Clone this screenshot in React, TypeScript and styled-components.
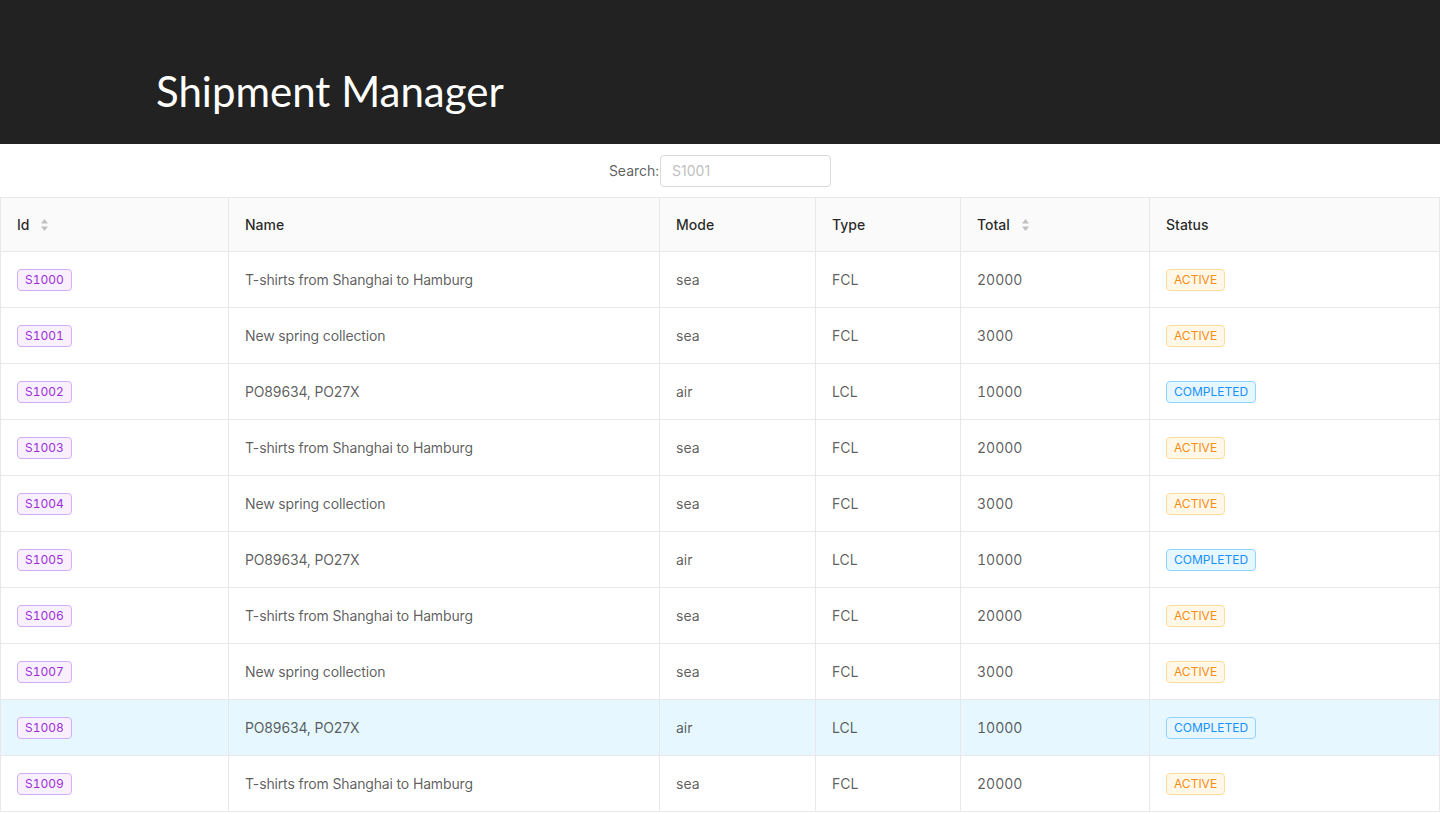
import React from "react";
import styled, { createGlobalStyle } from "styled-components";

const GlobalStyle = createGlobalStyle`
  html, body { margin: 0; padding: 0; background: #fff; }
  body {
    font-family: Inter, "Noto Sans", sans-serif;
    font-size: 14px;
    color: rgba(0,0,0,0.65);
    font-variant-numeric: tabular-nums;
  }
  * { box-sizing: border-box; }
`;

const Header = styled.header`
  height: 144px;
  background: #222222;
  display: flex;
  align-items: center;
  padding: 38px 0 0 156px;
`;

const Title = styled.h1`
  margin: 0;
  font-family: Lato, "Open Sans", sans-serif;
  font-weight: 400;
  font-size: 42px;
  color: #ffffff;
`;

const SearchBar = styled.div`
  height: 53px;
  display: flex;
  align-items: center;
  justify-content: center;
`;

const SearchLabel = styled.label`
  font-size: 14px;
  color: rgba(0,0,0,0.65);
  margin-right: 1px;
`;

const SearchInput = styled.input`
  width: 171px;
  height: 32px;
  border: 1px solid #d9d9d9;
  border-radius: 4px;
  padding: 4px 11px;
  font-family: Inter, sans-serif;
  font-size: 14px;
  color: rgba(0,0,0,0.65);
  outline: none;
  &::placeholder { color: #bfbfbf; }
`;

const Table = styled.table`
  border-collapse: separate;
  border-spacing: 0;
  width: 1440px;
  table-layout: fixed;
  border-left: 1px solid #e8e8e8;
  border-top: 1px solid #e8e8e8;
`;

const Th = styled.th`
  height: 54px;
  padding: 0 16px;
  text-align: left;
  font-weight: 500;
  color: rgba(0,0,0,0.85);
  background: #fafafa;
  border-right: 1px solid #e8e8e8;
  border-bottom: 1px solid #e8e8e8;
  white-space: nowrap;
`;

const HeadInner = styled.span`
  display: inline-flex;
  align-items: center;
  gap: 11px;
`;

const Row = styled.tr<{ $active?: boolean }>`
  background: ${(p) => (p.$active ? "#e6f7ff" : "#ffffff")};
`;

const Td = styled.td<{ $text?: boolean }>`
  height: 56px;
  padding: 0 16px;
  border-right: 1px solid #e8e8e8;
  border-bottom: 1px solid #e8e8e8;
  color: rgba(0,0,0,0.65);
  white-space: nowrap;
  ${(p) =>
    p.$text
      ? "font-variant-numeric: normal; letter-spacing: -0.15px;"
      : ""}
`;

const tagColors = {
  purple: { c: "#9b2fd6", bg: "#f9f0ff", b: "#d3adf7" },
  orange: { c: "#fa8c16", bg: "#fff8e8", b: "#ffdc9a" },
  blue: { c: "#1890ff", bg: "#e6f7ff", b: "#91d5ff" },
};

const Tag = styled.span<{ $tone: keyof typeof tagColors }>`
  display: inline-block;
  height: 22px;
  line-height: 20px;
  padding: 0 7px;
  font-size: 12px;
  border-radius: 4px;
  color: ${(p) => tagColors[p.$tone].c};
  background: ${(p) => tagColors[p.$tone].bg};
  border: 1px solid ${(p) => tagColors[p.$tone].b};
`;

const SortIcon = () => (
  <svg width="9" height="14" viewBox="0 0 9 14" aria-hidden>
    <path d="M4.5 1 L8 5.5 L1 5.5 Z" fill="#bfbfbf" />
    <path d="M4.5 13 L8 8.5 L1 8.5 Z" fill="#bfbfbf" />
  </svg>
);

const widths = [228, 431, 156, 145, 189, 290];

const names = ["T-shirts from Shanghai to Hamburg", "New spring collection", "PO89634, PO27X"];
const modes = ["sea", "sea", "air"];
const types = ["FCL", "FCL", "LCL"];
const totals = ["20000", "3000", "10000"];
const statuses = ["ACTIVE", "ACTIVE", "COMPLETED"];

const rows = Array.from({ length: 10 }, (_, i) => ({
  id: `S${1000 + i}`,
  name: names[i % 3],
  mode: modes[i % 3],
  type: types[i % 3],
  total: totals[i % 3],
  status: statuses[i % 3],
}));

export default function App() {
  return (
    <>
      <GlobalStyle />
      <Header>
        <Title>Shipment Manager</Title>
      </Header>
      <SearchBar>
        <SearchLabel htmlFor="search">Search:</SearchLabel>
        <SearchInput id="search" placeholder="S1001" />
      </SearchBar>
      <Table>
        <colgroup>
          {widths.map((w, i) => (
            <col key={i} style={{ width: w }} />
          ))}
        </colgroup>
        <thead>
          <tr>
            <Th><HeadInner>Id <SortIcon /></HeadInner></Th>
            <Th>Name</Th>
            <Th>Mode</Th>
            <Th>Type</Th>
            <Th><HeadInner>Total <SortIcon /></HeadInner></Th>
            <Th>Status</Th>
          </tr>
        </thead>
        <tbody>
          {rows.map((r, i) => (
            <Row key={r.id} $active={i === 8}>
              <Td><Tag $tone="purple">{r.id}</Tag></Td>
              <Td $text>{r.name}</Td>
              <Td>{r.mode}</Td>
              <Td>{r.type}</Td>
              <Td>{r.total}</Td>
              <Td>
                <Tag $tone={r.status === "ACTIVE" ? "orange" : "blue"}>{r.status}</Tag>
              </Td>
            </Row>
          ))}
        </tbody>
      </Table>
    </>
  );
}
